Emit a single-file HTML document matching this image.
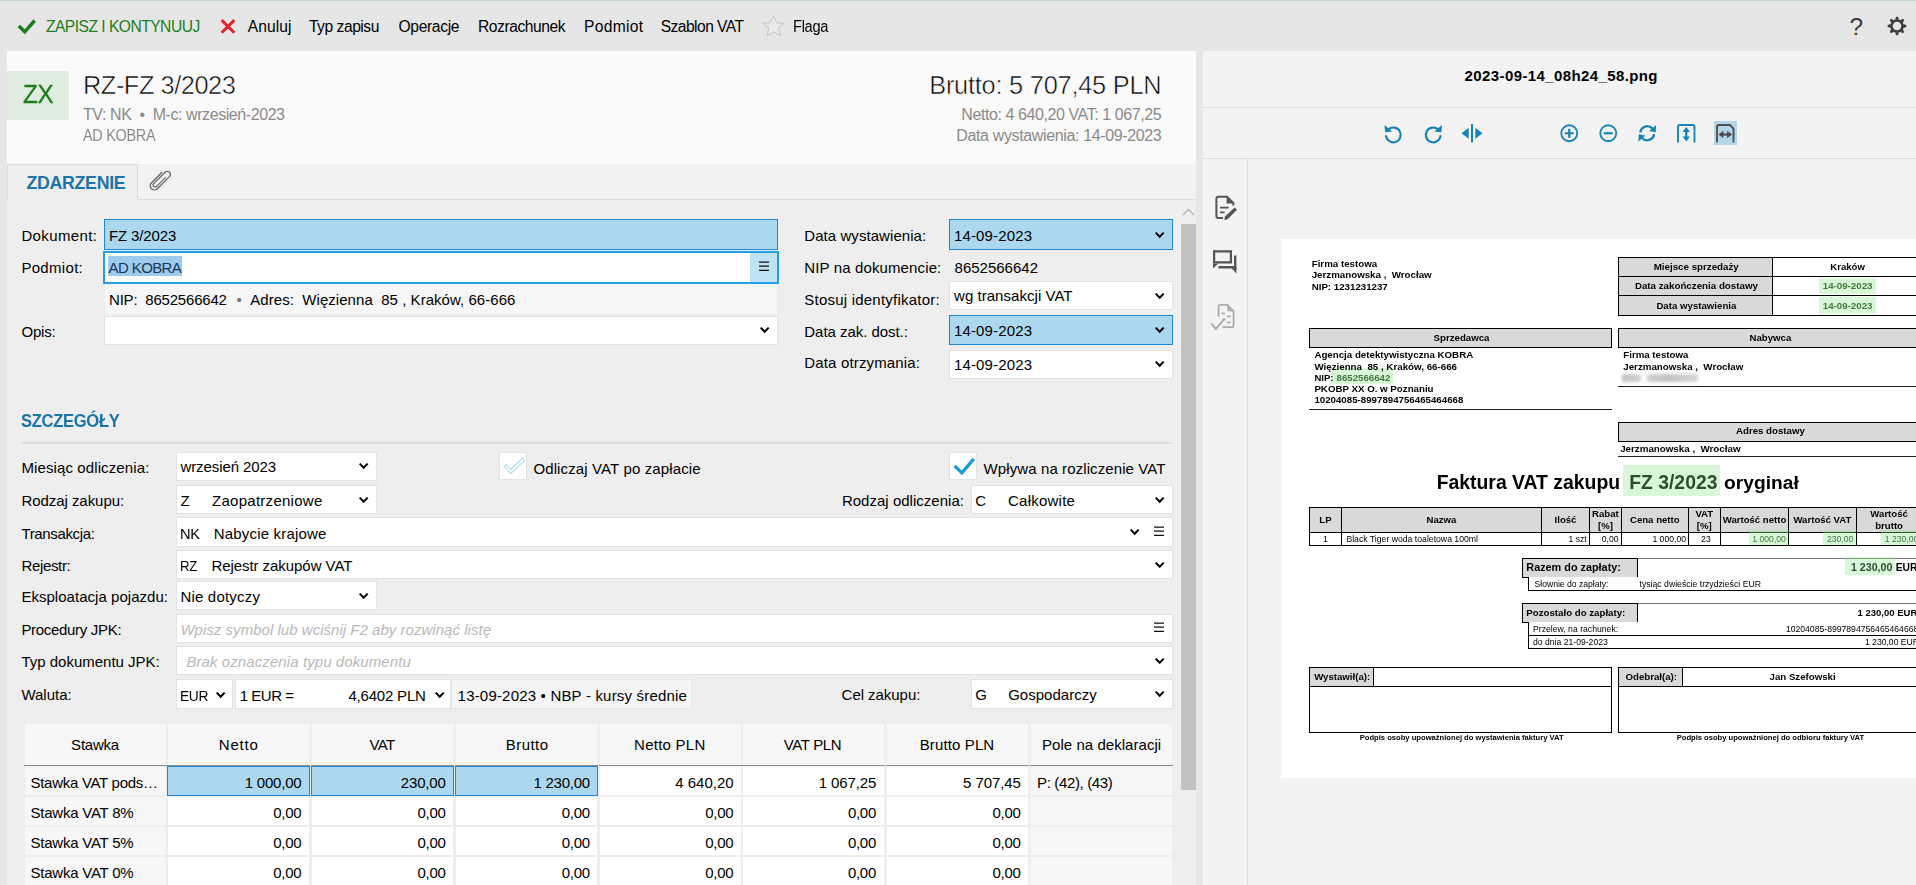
<!DOCTYPE html>
<html lang="pl"><head><meta charset="utf-8"><title>RZ-FZ 3/2023</title>
<style>
html,body{margin:0;padding:0}
body{width:1916px;height:885px;overflow:hidden;position:relative;background:#eee;font-family:"Liberation Sans",sans-serif;color:#000}
.b{position:absolute;box-sizing:border-box}
.t{position:absolute;white-space:pre;line-height:1;display:block}
.inp{position:absolute;box-sizing:border-box;background:#fff;border:1px solid #e3e3e3}
.blue{background:#abd8ef;border:1px solid #1f87d8}
svg{position:absolute;overflow:visible}
.doc{color:#000}
.dt{filter:blur(0.3px)}
.thin{-webkit-text-stroke:0.55px #fafafa}
.zx{-webkit-text-stroke:0.35px #1b7f1b}
</style></head>
<body>
<header id="toolbar">
<div class="b" style="left:0px;top:0px;width:1916px;height:51px;background:#e6e6e6;"></div>
<div class="b" style="left:0px;top:0px;width:1916px;height:1px;background:#c5d8c5;"></div>
</header>
<div class="b" style="left:0px;top:51px;width:7px;height:834px;background:#e6e6e6;"></div>
<section id="docheader">
<div class="b" style="left:7px;top:51px;width:1189px;height:113px;background:#fafafa;"></div>
<div class="b" style="left:7px;top:71px;width:62px;height:49px;background:#e1ece1;"></div>
</section>
<nav id="tabs">
<div class="b" style="left:7px;top:164px;width:1189px;height:36px;background:#f2f2f2;"></div>
<div class="b" style="left:7px;top:199px;width:1189px;height:1px;background:#dcdcdc;"></div>
<div class="b" style="left:7px;top:164px;width:131px;height:36px;background:#eeeeee;border:1px solid #dcdcdc;border-bottom:1px solid #f1f1f1;"></div>
</nav>
<main id="form">
<div class="b" style="left:7px;top:200px;width:1189px;height:685px;background:#eeeeee;"></div>
<div class="inp blue" style="left:104px;top:219px;width:674px;height:31px;"></div>
<div class="b" style="left:103px;top:250.5px;width:676.3px;height:33.0px;background:#fff;border:2px solid #22a0e2;"></div>
<div class="b" style="left:750px;top:252.5px;width:27.299999999999955px;height:29.0px;background:#bde3f5;"></div>
<svg style="left:759px;top:261.2px" width="10" height="10" viewBox="0 0 10 10"><path d="M0 1H10M0 5.2H10M0 9.4H10" stroke="#111" stroke-width="1.25" fill="none"/></svg>
<div class="b" style="left:108px;top:256px;width:74px;height:20px;background:#9dcbee;"></div>
<div class="b" style="left:105px;top:284px;width:672px;height:29.5px;background:#f6f6f6;"></div>
<div class="inp" style="left:104px;top:316px;width:674px;height:29px;"></div>
<svg style="left:759.7px;top:327px" width="9.4" height="6.2" viewBox="0 0 9.4 6.2"><path d="M0 1.3 L1.4 0 L4.7 3.3 L8 0 L9.4 1.3 L4.7 6.2 Z" fill="#000"/></svg>
<div class="inp blue" style="left:949px;top:219px;width:224px;height:31px;"></div>
<div class="inp" style="left:949px;top:281px;width:224px;height:29px;"></div>
<div class="inp blue" style="left:949px;top:315px;width:224px;height:30px;"></div>
<div class="inp" style="left:949px;top:350px;width:224px;height:29px;"></div>
<svg style="left:1154.7px;top:232px" width="9.4" height="6.2" viewBox="0 0 9.4 6.2"><path d="M0 1.3 L1.4 0 L4.7 3.3 L8 0 L9.4 1.3 L4.7 6.2 Z" fill="#000"/></svg>
<svg style="left:1154.7px;top:293px" width="9.4" height="6.2" viewBox="0 0 9.4 6.2"><path d="M0 1.3 L1.4 0 L4.7 3.3 L8 0 L9.4 1.3 L4.7 6.2 Z" fill="#000"/></svg>
<svg style="left:1154.7px;top:327px" width="9.4" height="6.2" viewBox="0 0 9.4 6.2"><path d="M0 1.3 L1.4 0 L4.7 3.3 L8 0 L9.4 1.3 L4.7 6.2 Z" fill="#000"/></svg>
<svg style="left:1154.7px;top:361px" width="9.4" height="6.2" viewBox="0 0 9.4 6.2"><path d="M0 1.3 L1.4 0 L4.7 3.3 L8 0 L9.4 1.3 L4.7 6.2 Z" fill="#000"/></svg>
<div class="b" style="left:1181px;top:200px;width:15px;height:685px;background:#eeeeee;"></div>
<div class="b" style="left:1181px;top:224px;width:15px;height:566px;background:#c1c1c1;"></div>
<svg style="left:1182px;top:208px" width="13" height="8" viewBox="0 0 13 8"><path d="M1 7 L6.5 1.5 L12 7" fill="none" stroke="#b5b5b5" stroke-width="1.4"/></svg>
<div class="b" style="left:21px;top:442px;width:1151px;height:2px;background:#dddddd;"></div>
<div class="inp" style="left:176px;top:452px;width:201px;height:29px;"></div>
<svg style="left:358.7px;top:463px" width="9.4" height="6.2" viewBox="0 0 9.4 6.2"><path d="M0 1.3 L1.4 0 L4.7 3.3 L8 0 L9.4 1.3 L4.7 6.2 Z" fill="#000"/></svg>
<div class="inp" style="left:176px;top:485px;width:201px;height:29px;"></div>
<svg style="left:358.7px;top:497px" width="9.4" height="6.2" viewBox="0 0 9.4 6.2"><path d="M0 1.3 L1.4 0 L4.7 3.3 L8 0 L9.4 1.3 L4.7 6.2 Z" fill="#000"/></svg>
<div class="inp" style="left:176px;top:517px;width:997px;height:30px;"></div>
<svg style="left:1129.7px;top:529px" width="9.4" height="6.2" viewBox="0 0 9.4 6.2"><path d="M0 1.3 L1.4 0 L4.7 3.3 L8 0 L9.4 1.3 L4.7 6.2 Z" fill="#000"/></svg>
<svg style="left:1154px;top:526.3px" width="10" height="10" viewBox="0 0 10 10"><path d="M0 1H10M0 5.2H10M0 9.4H10" stroke="#111" stroke-width="1.25" fill="none"/></svg>
<div class="inp" style="left:176px;top:550px;width:997px;height:29px;"></div>
<svg style="left:1154.7px;top:562px" width="9.4" height="6.2" viewBox="0 0 9.4 6.2"><path d="M0 1.3 L1.4 0 L4.7 3.3 L8 0 L9.4 1.3 L4.7 6.2 Z" fill="#000"/></svg>
<div class="inp" style="left:176px;top:581px;width:201px;height:29px;"></div>
<svg style="left:358.7px;top:593px" width="9.4" height="6.2" viewBox="0 0 9.4 6.2"><path d="M0 1.3 L1.4 0 L4.7 3.3 L8 0 L9.4 1.3 L4.7 6.2 Z" fill="#000"/></svg>
<div class="inp" style="left:176px;top:614px;width:997px;height:29px;"></div>
<svg style="left:1154px;top:622px" width="10" height="10" viewBox="0 0 10 10"><path d="M0 1H10M0 5.2H10M0 9.4H10" stroke="#111" stroke-width="1.25" fill="none"/></svg>
<div class="inp" style="left:176px;top:646px;width:997px;height:29px;"></div>
<svg style="left:1154.7px;top:658px" width="9.4" height="6.2" viewBox="0 0 9.4 6.2"><path d="M0 1.3 L1.4 0 L4.7 3.3 L8 0 L9.4 1.3 L4.7 6.2 Z" fill="#000"/></svg>
<div class="inp" style="left:176px;top:679px;width:57px;height:30px;"></div>
<svg style="left:215.7px;top:692px" width="9.4" height="6.2" viewBox="0 0 9.4 6.2"><path d="M0 1.3 L1.4 0 L4.7 3.3 L8 0 L9.4 1.3 L4.7 6.2 Z" fill="#000"/></svg>
<div class="inp" style="left:235px;top:679px;width:216px;height:30px;"></div>
<svg style="left:434.7px;top:692px" width="9.4" height="6.2" viewBox="0 0 9.4 6.2"><path d="M0 1.3 L1.4 0 L4.7 3.3 L8 0 L9.4 1.3 L4.7 6.2 Z" fill="#000"/></svg>
<div class="b" style="left:451px;top:679px;width:241px;height:30px;background:#f5f5f5;border:1px solid #e6e6e6;"></div>
<div class="inp" style="left:498.5px;top:451.5px;width:28.799999999999955px;height:28.80000000000001px;"></div>
<svg style="left:498px;top:451px" width="30" height="30" viewBox="0 0 30 30"><path d="M6.4 15.7 L12.7 22.6 L26.4 9.7 L24.7 7 L12.7 18.5 L8.6 14 Z" fill="#fff" stroke="#a9dcf1" stroke-width="1.1" stroke-linejoin="round"/></svg>
<div class="inp" style="left:948.5px;top:451.5px;width:28.799999999999955px;height:28.80000000000001px;"></div>
<svg style="left:952px;top:456px" width="24" height="20" viewBox="0 0 24 20"><path d="M2.6 9.8 L9.9 16.8 L21.8 2.9" fill="none" stroke="#1b9ad8" stroke-width="3.2"/></svg>
<div class="inp" style="left:971px;top:485px;width:202px;height:29px;"></div>
<svg style="left:1154.7px;top:497px" width="9.4" height="6.2" viewBox="0 0 9.4 6.2"><path d="M0 1.3 L1.4 0 L4.7 3.3 L8 0 L9.4 1.3 L4.7 6.2 Z" fill="#000"/></svg>
<div class="inp" style="left:971px;top:679px;width:202px;height:30px;"></div>
<svg style="left:1154.7px;top:691px" width="9.4" height="6.2" viewBox="0 0 9.4 6.2"><path d="M0 1.3 L1.4 0 L4.7 3.3 L8 0 L9.4 1.3 L4.7 6.2 Z" fill="#000"/></svg>
<div class="b" style="left:25px;top:724px;width:141px;height:41px;background:#f7f7f7;"></div>
<div class="b" style="left:24px;top:764.5px;width:143px;height:1.1000000000000227px;background:#8c8c8c;"></div>
<div class="b" style="left:168px;top:724px;width:141px;height:41px;background:#f7f7f7;"></div>
<div class="b" style="left:167px;top:764.5px;width:143px;height:1.1000000000000227px;background:#8c8c8c;"></div>
<div class="b" style="left:312px;top:724px;width:141px;height:41px;background:#f7f7f7;"></div>
<div class="b" style="left:311px;top:764.5px;width:143px;height:1.1000000000000227px;background:#8c8c8c;"></div>
<div class="b" style="left:456px;top:724px;width:141px;height:41px;background:#f7f7f7;"></div>
<div class="b" style="left:455px;top:764.5px;width:143px;height:1.1000000000000227px;background:#8c8c8c;"></div>
<div class="b" style="left:599.5px;top:724px;width:141.0px;height:41px;background:#f7f7f7;"></div>
<div class="b" style="left:598.5px;top:764.5px;width:143.0px;height:1.1000000000000227px;background:#8c8c8c;"></div>
<div class="b" style="left:743px;top:724px;width:141px;height:41px;background:#f7f7f7;"></div>
<div class="b" style="left:742px;top:764.5px;width:143px;height:1.1000000000000227px;background:#8c8c8c;"></div>
<div class="b" style="left:887px;top:724px;width:141px;height:41px;background:#f7f7f7;"></div>
<div class="b" style="left:886px;top:764.5px;width:143px;height:1.1000000000000227px;background:#8c8c8c;"></div>
<div class="b" style="left:1031px;top:724px;width:141px;height:41px;background:#f7f7f7;"></div>
<div class="b" style="left:1030px;top:764.5px;width:143px;height:1.1000000000000227px;background:#8c8c8c;"></div>
<div class="b" style="left:25px;top:767px;width:141px;height:28px;background:#f7f7f7;"></div>
<div class="inp blue" style="left:167px;top:766px;width:143.2px;height:30px;"></div>
<div class="inp blue" style="left:311px;top:766px;width:143.2px;height:30px;"></div>
<div class="inp blue" style="left:455px;top:766px;width:143.20000000000005px;height:30px;"></div>
<div class="b" style="left:599.5px;top:767px;width:141.0px;height:28px;background:#ffffff;"></div>
<div class="b" style="left:743px;top:767px;width:141px;height:28px;background:#ffffff;"></div>
<div class="b" style="left:887px;top:767px;width:141px;height:28px;background:#ffffff;"></div>
<div class="b" style="left:1031px;top:767px;width:141px;height:28px;background:#f7f7f7;"></div>
<div class="b" style="left:25px;top:797px;width:141px;height:28px;background:#f7f7f7;"></div>
<div class="b" style="left:168px;top:797px;width:141px;height:28px;background:#ffffff;"></div>
<div class="b" style="left:312px;top:797px;width:141px;height:28px;background:#ffffff;"></div>
<div class="b" style="left:456px;top:797px;width:141px;height:28px;background:#ffffff;"></div>
<div class="b" style="left:599.5px;top:797px;width:141.0px;height:28px;background:#ffffff;"></div>
<div class="b" style="left:743px;top:797px;width:141px;height:28px;background:#ffffff;"></div>
<div class="b" style="left:887px;top:797px;width:141px;height:28px;background:#ffffff;"></div>
<div class="b" style="left:1031px;top:797px;width:141px;height:28px;background:#f7f7f7;"></div>
<div class="b" style="left:25px;top:827px;width:141px;height:28px;background:#f7f7f7;"></div>
<div class="b" style="left:168px;top:827px;width:141px;height:28px;background:#ffffff;"></div>
<div class="b" style="left:312px;top:827px;width:141px;height:28px;background:#ffffff;"></div>
<div class="b" style="left:456px;top:827px;width:141px;height:28px;background:#ffffff;"></div>
<div class="b" style="left:599.5px;top:827px;width:141.0px;height:28px;background:#ffffff;"></div>
<div class="b" style="left:743px;top:827px;width:141px;height:28px;background:#ffffff;"></div>
<div class="b" style="left:887px;top:827px;width:141px;height:28px;background:#ffffff;"></div>
<div class="b" style="left:1031px;top:827px;width:141px;height:28px;background:#f7f7f7;"></div>
<div class="b" style="left:25px;top:857px;width:141px;height:28px;background:#f7f7f7;"></div>
<div class="b" style="left:168px;top:857px;width:141px;height:28px;background:#ffffff;"></div>
<div class="b" style="left:312px;top:857px;width:141px;height:28px;background:#ffffff;"></div>
<div class="b" style="left:456px;top:857px;width:141px;height:28px;background:#ffffff;"></div>
<div class="b" style="left:599.5px;top:857px;width:141.0px;height:28px;background:#ffffff;"></div>
<div class="b" style="left:743px;top:857px;width:141px;height:28px;background:#ffffff;"></div>
<div class="b" style="left:887px;top:857px;width:141px;height:28px;background:#ffffff;"></div>
<div class="b" style="left:1031px;top:857px;width:141px;height:28px;background:#f7f7f7;"></div>
</main>
<aside id="preview">
<div class="b" style="left:1196px;top:51px;width:7px;height:834px;background:#e6e6e6;"></div>
<div class="b" style="left:1203px;top:51px;width:713px;height:834px;background:#f3f3f3;"></div>
<div class="b" style="left:1203px;top:107px;width:713px;height:1px;background:#dcdcdc;"></div>
<div class="b" style="left:1203px;top:158px;width:713px;height:1px;background:#dcdcdc;"></div>
<div class="b" style="left:1247px;top:159px;width:1px;height:726px;background:#dcdcdc;"></div>
<svg style="left:1384.2px;top:123.9px" width="18.5" height="18.5" viewBox="0 0 20 20"><path d="M4.6 6 A8 8 0 1 1 2.1 12.2" fill="none" stroke="#1484b8" stroke-width="2.3"/><path d="M0.6 1.2 L1.2 9 L8.8 8.2 Z" fill="#1484b8"/></svg>
<svg style="left:1423.9px;top:123.9px" width="18.5" height="18.5" viewBox="0 0 20 20"><path d="M15.4 6 A8 8 0 1 0 17.9 12.2" fill="none" stroke="#1484b8" stroke-width="2.3"/><path d="M19.4 1.2 L18.8 9 L11.2 8.2 Z" fill="#1484b8"/></svg>
<svg style="left:1460.8px;top:123.5px" width="22" height="18.5" viewBox="0 0 24 20"><path d="M12 0 V20" stroke="#1484b8" stroke-width="2.2"/><path d="M8.4 4 V16 L0.6 10 Z M15.6 4 V16 L23.4 10 Z" fill="#1484b8"/></svg>
<svg style="left:1560px;top:124px" width="18.5" height="18.5" viewBox="0 0 20 20"><circle cx="10" cy="10" r="8.6" fill="none" stroke="#1484b8" stroke-width="2"/><path d="M5.2 10 H14.8 M10 5.2 V14.8" stroke="#1484b8" stroke-width="2.4"/></svg>
<svg style="left:1599px;top:124px" width="18.5" height="18.5" viewBox="0 0 20 20"><circle cx="10" cy="10" r="8.6" fill="none" stroke="#1484b8" stroke-width="2"/><path d="M5.2 10 H14.8" stroke="#1484b8" stroke-width="2.4"/></svg>
<svg style="left:1638.2px;top:124px" width="18.5" height="18.5" viewBox="0 0 20 20"><path d="M2.6 9 A7.5 7.5 0 0 1 15.6 4.9" fill="none" stroke="#1484b8" stroke-width="2.5"/><path d="M17.4 11 A7.5 7.5 0 0 1 4.4 15.1" fill="none" stroke="#1484b8" stroke-width="2.5"/><path d="M19.6 1.2 L19.2 9 L12 7.6 Z M0.4 18.8 L0.8 11 L8 12.4 Z" fill="#1484b8"/></svg>
<svg style="left:1676.8px;top:124px" width="18.5" height="18.5" viewBox="0 0 20 20"><path d="M1.1 20 V3.2 Q1.1 1.1 3.2 1.1 H16.8 Q18.9 1.1 18.9 3.2 V20" fill="none" stroke="#1484b8" stroke-width="2"/><path d="M10 6 V16" stroke="#1484b8" stroke-width="2.4"/><path d="M10 3.2 L14 8.6 H6 Z M10 18.8 L14 13.4 H6 Z" fill="#1484b8"/></svg>
<div class="b" style="left:1713.7px;top:121px;width:23.299999999999955px;height:23.69999999999999px;background:#b5d6e8;"></div>
<svg style="left:1716px;top:124px" width="18.5" height="18.5" viewBox="0 0 20 20"><path d="M1.1 20 V3.2 Q1.1 1.1 3.2 1.1 H15 L18.9 5 V20" fill="none" stroke="#4d4d4d" stroke-width="2"/><path d="M5 11.4 H15" stroke="#4d4d4d" stroke-width="2.4"/><path d="M2.6 11.4 L8 7.4 V15.4 Z M17.4 11.4 L12 7.4 V15.4 Z" fill="#4d4d4d"/></svg>
<svg style="left:1887px;top:16.3px" width="20" height="20" viewBox="0 0 20 20"><g transform="translate(10 10)" fill="#3c3c3c"><path d="M-1.9 -6.2 L-0.9 -9.3 H0.9 L1.9 -6.2 Z" transform="rotate(0)"/><path d="M-1.9 -6.2 L-0.9 -9.3 H0.9 L1.9 -6.2 Z" transform="rotate(45)"/><path d="M-1.9 -6.2 L-0.9 -9.3 H0.9 L1.9 -6.2 Z" transform="rotate(90)"/><path d="M-1.9 -6.2 L-0.9 -9.3 H0.9 L1.9 -6.2 Z" transform="rotate(135)"/><path d="M-1.9 -6.2 L-0.9 -9.3 H0.9 L1.9 -6.2 Z" transform="rotate(180)"/><path d="M-1.9 -6.2 L-0.9 -9.3 H0.9 L1.9 -6.2 Z" transform="rotate(225)"/><path d="M-1.9 -6.2 L-0.9 -9.3 H0.9 L1.9 -6.2 Z" transform="rotate(270)"/><path d="M-1.9 -6.2 L-0.9 -9.3 H0.9 L1.9 -6.2 Z" transform="rotate(315)"/><circle r="5.55" fill="none" stroke="#3c3c3c" stroke-width="2.5"/></g></svg>
<svg style="left:1214px;top:194px" width="24" height="27" viewBox="0 0 24 27"><path d="M9 24 H4.3 Q2.4 24 2.4 22.1 V4.6 Q2.4 2.7 4.3 2.7 H13 L19.4 9 V11.5" fill="none" stroke="#555555" stroke-width="2"/><path d="M12.6 2.9 L19.2 9.4 H12.6 Z" fill="#555555"/><path d="M6 13.6 H14.6 M6 18.4 H10.6" stroke="#555555" stroke-width="1.9"/><path d="M10.3 26 L11 22.6 L20.6 13.4 L23 15.8 L13.6 25.2 Z" fill="#555555"/></svg>
<svg style="left:1212px;top:249px" width="26" height="26" viewBox="0 0 26 26"><path d="M2.1 2.4 H18.9 V13.4 H2.1 Z" fill="none" stroke="#555555" stroke-width="2.2"/><path d="M1 14.4 V19.4 L6.4 14.4 Z" fill="#555555"/><path d="M23.2 6.4 V21 M6.5 18.3 H24.3" fill="none" stroke="#555555" stroke-width="2.4"/><path d="M18.5 18 L24.4 24.4 V18 Z" fill="#555555"/></svg>
<svg style="left:1210px;top:303px" width="26" height="28" viewBox="0 0 26 28"><path d="M8.6 14 V3.6 Q8.6 1.9 10.3 1.9 H17.5 L23.6 8 V22.4 Q23.6 24.1 21.9 24.1 H12.5" fill="none" stroke="#adadad" stroke-width="1.8"/><path d="M17.2 2.2 L23.3 8.3 H17.2 Z" fill="#adadad"/><path d="M11.5 10.4 h3.5 M17 13.4 h3.6 M12.5 16.4 h3 M17 19.4 h3.6" stroke="#adadad" stroke-width="1.7"/><path d="M1.2 20.4 L5.8 26 L14.6 15.6" fill="none" stroke="#adadad" stroke-width="2"/></svg>
<svg style="left:0px;top:0px" width="60" height="51" viewBox="0 0 60 51"><path d="M18.8 25.9 L24.8 31.8 L34.7 20.5" fill="none" stroke="#1b7f1b" stroke-width="3.5"/></svg>
<svg style="left:200px;top:0px" width="60" height="51" viewBox="0 0 60 51"><path d="M21.6 20.1 L34.3 32.8 M34.3 20.1 L21.6 32.8" fill="none" stroke="#e3262e" stroke-width="3"/></svg>
<svg style="left:750px;top:0px" width="60" height="51" viewBox="0 0 60 51"><path d="M23.5 16.3 L26.9 22.7 L33.8 23.3 L28.5 28 L30.5 35.6 L23.7 32 L17.3 35.6 L18.8 28 L13.4 23.3 L20 22.7 Z" fill="#e9e9e9" stroke="#c4c4c4" stroke-width="1"/></svg>
<svg style="left:147.6px;top:168.2px" width="24" height="24" viewBox="0 0 24 24"><g transform="rotate(45 12 12) translate(12 12) scale(1.07) translate(-12 -12)" fill="none" stroke="#666" stroke-width="1.15"><path d="M8.2 5.5 V19.5 A3.9 3.9 0 0 0 16 19.5 V3.5 A2.9 2.9 0 0 0 10.2 3.5 V18.5 A1.9 1.9 0 0 0 14 18.5 V6.5"/></g></svg>
<article id="invoice" class="doc">
<div class="b" style="left:1281px;top:239px;width:635px;height:539px;background:#ffffff;"></div>
<div class="b" style="left:1618px;top:257px;width:312px;height:59px;background:#fff;border:1px solid #000;"></div>
<div class="b" style="left:1618px;top:257px;width:155px;height:59px;background:#d9d9d9;border:1px solid #000;"></div>
<div class="b" style="left:1618px;top:276px;width:312px;height:1px;background:#000;"></div>
<div class="b" style="left:1618px;top:295px;width:312px;height:1px;background:#000;"></div>
<div class="b" style="left:1819px;top:277.5px;width:56.5px;height:16.0px;background:rgba(140,235,140,0.34);"></div>
<div class="b" style="left:1819px;top:297px;width:56.5px;height:16.5px;background:rgba(140,235,140,0.34);"></div>
<div class="b" style="left:1309px;top:328px;width:303px;height:20px;background:#d9d9d9;border:1px solid #000;"></div>
<div class="b" style="left:1618px;top:328px;width:312px;height:20px;background:#d9d9d9;border:1px solid #000;"></div>
<div class="b" style="left:1330.7px;top:367.5px;width:62.59999999999991px;height:16.5px;background:rgba(140,235,140,0.34);"></div>
<div class="b" style="left:1309px;top:408.8px;width:303px;height:1.1999999999999886px;background:#222;"></div>
<div class="b" style="left:1622px;top:373.5px;width:76px;height:8.5px;background:linear-gradient(90deg,#c4c4c4,#d0d0d0 22%,#fff 27%,#fff 31%,#cfcfcf 35%,#c2c2c2 60%,#d6d6d6);filter:blur(1.5px);"></div>
<div class="b" style="left:1618px;top:385.5px;width:312px;height:1.0px;background:#222;"></div>
<div class="b" style="left:1618px;top:422px;width:312px;height:20px;background:#d9d9d9;border:1px solid #000;"></div>
<div class="b" style="left:1618px;top:455.5px;width:312px;height:1.0px;background:#222;"></div>
<div class="b" style="left:1622.6px;top:465px;width:97.20000000000005px;height:31.399999999999977px;background:rgba(140,235,140,0.34);"></div>
<div class="b" style="left:1309px;top:507px;width:621px;height:26px;background:#d9d9d9;border:1px solid #000;"></div>
<div class="b" style="left:1309px;top:532px;width:621px;height:14px;background:#fff;border:1px solid #000;"></div>
<div class="b" style="left:1341px;top:507px;width:1px;height:39px;background:#000;"></div>
<div class="b" style="left:1541px;top:507px;width:1px;height:39px;background:#000;"></div>
<div class="b" style="left:1589px;top:507px;width:1px;height:39px;background:#000;"></div>
<div class="b" style="left:1620.8px;top:507px;width:1.0px;height:39px;background:#000;"></div>
<div class="b" style="left:1687.8px;top:507px;width:1.0px;height:39px;background:#000;"></div>
<div class="b" style="left:1719.8px;top:507px;width:1.0px;height:39px;background:#000;"></div>
<div class="b" style="left:1788.2px;top:507px;width:1.0px;height:39px;background:#000;"></div>
<div class="b" style="left:1855.6px;top:507px;width:1.0px;height:39px;background:#000;"></div>
<div class="b" style="left:1748.6px;top:529.5px;width:39.40000000000009px;height:15.100000000000023px;background:rgba(140,235,140,0.34);"></div>
<div class="b" style="left:1823.4px;top:529.5px;width:32.09999999999991px;height:15.100000000000023px;background:rgba(140,235,140,0.34);"></div>
<div class="b" style="left:1880.8px;top:529.5px;width:35.200000000000045px;height:15.100000000000023px;background:rgba(140,235,140,0.34);"></div>
<div class="b" style="left:1637px;top:558px;width:293px;height:19.5px;background:#fff;border:1px solid #777;"></div>
<div class="b" style="left:1521.5px;top:558px;width:116.5px;height:19.5px;background:#d9d9d9;border:1px solid #000;"></div>
<div class="b" style="left:1845.2px;top:557px;width:49.5px;height:17.5px;background:rgba(140,235,140,0.34);"></div>
<div class="b" style="left:1528px;top:577px;width:402px;height:14px;background:#fff;border:1px solid #000;border-top:none;"></div>
<div class="b" style="left:1637px;top:603px;width:293px;height:19.5px;background:#fff;border:1px solid #777;"></div>
<div class="b" style="left:1521.5px;top:603px;width:116.5px;height:19.5px;background:#d9d9d9;border:1px solid #000;"></div>
<div class="b" style="left:1528px;top:622px;width:402px;height:14px;background:#fff;border:1px solid #000;border-top:none;"></div>
<div class="b" style="left:1528px;top:635px;width:402px;height:14px;background:#fff;border:1px solid #000;"></div>
<div class="b" style="left:1309px;top:667px;width:303px;height:66px;background:#fff;border:1px solid #000;"></div>
<div class="b" style="left:1309px;top:667px;width:65px;height:20px;background:#d9d9d9;border:1px solid #000;"></div>
<div class="b" style="left:1309px;top:686px;width:303px;height:1px;background:#000;"></div>
<div class="b" style="left:1618px;top:667px;width:312px;height:66px;background:#fff;border:1px solid #000;"></div>
<div class="b" style="left:1618px;top:667px;width:65px;height:20px;background:#d9d9d9;border:1px solid #000;"></div>
<div class="b" style="left:1618px;top:686px;width:312px;height:1px;background:#000;"></div>
<span class="t" style="top:18px;font-size:15.6px;line-height:17px;left:45.90px;color:#1b7f1b;letter-spacing:-0.505px;">ZAPISZ I KONTYNUUJ</span>
<span class="t" style="top:18px;font-size:15.6px;line-height:17px;left:247.80px;letter-spacing:0.048px;">Anuluj</span>
<span class="t" style="top:18px;font-size:15.6px;line-height:17px;left:308.90px;letter-spacing:-0.450px;">Typ zapisu</span>
<span class="t" style="top:18px;font-size:15.6px;line-height:17px;left:398.50px;letter-spacing:-0.326px;">Operacje</span>
<span class="t" style="top:18px;font-size:15.6px;line-height:17px;left:478.00px;letter-spacing:-0.439px;">Rozrachunek</span>
<span class="t" style="top:18px;font-size:15.6px;line-height:17px;left:584.00px;letter-spacing:0.297px;">Podmiot</span>
<span class="t" style="top:18px;font-size:15.6px;line-height:17px;left:660.70px;letter-spacing:-0.540px;">Szablon VAT</span>
<span class="t" style="top:18px;font-size:15.6px;line-height:17px;left:792.90px;letter-spacing:-0.350px;transform:scaleX(0.9411);transform-origin:0 0;">Flaga</span>
<span class="t" style="top:13px;font-size:24.5px;line-height:27px;left:1849.60px;color:#3c3c3c;">?</span>
<span class="t zx" style="top:80px;font-size:25.7px;line-height:28px;left:22.90px;color:#1b7f1b;letter-spacing:-0.350px;transform:scaleX(0.9422);transform-origin:0 0;">ZX</span>
<span class="t thin" style="top:71px;font-size:25.4px;line-height:28px;left:83.00px;letter-spacing:-0.477px;">RZ-FZ 3/2023</span>
<span class="t" style="top:106px;font-size:16px;line-height:17px;left:83.00px;color:#8a8a8a;letter-spacing:-0.427px;">TV: NK  •  M-c: wrzesień-2023</span>
<span class="t" style="top:127px;font-size:16px;line-height:17px;left:83.00px;color:#8a8a8a;letter-spacing:-0.350px;transform:scaleX(0.9048);transform-origin:0 0;">AD KOBRA</span>
<span class="t thin" style="top:71px;font-size:25.4px;line-height:28px;left:929.20px;letter-spacing:-0.244px;">Brutto: 5 707,45 PLN</span>
<span class="t" style="top:106px;font-size:16px;line-height:17px;left:961.30px;color:#8a8a8a;letter-spacing:-0.414px;">Netto: 4 640,20 VAT: 1 067,25</span>
<span class="t" style="top:127px;font-size:16px;line-height:17px;left:956.30px;color:#8a8a8a;letter-spacing:-0.364px;">Data wystawienia: 14-09-2023</span>
<span class="t" style="top:173px;font-size:17.8px;line-height:20px;left:26.60px;font-weight:700;color:#1b75a8;letter-spacing:-0.344px;">ZDARZENIE</span>
<span class="t" style="top:227px;font-size:15px;line-height:17px;left:21.40px;letter-spacing:0.369px;">Dokument:</span>
<span class="t" style="top:227px;font-size:15px;line-height:17px;left:108.90px;letter-spacing:-0.109px;">FZ 3/2023</span>
<span class="t" style="top:259px;font-size:15px;line-height:17px;left:21.40px;letter-spacing:0.314px;">Podmiot:</span>
<span class="t" style="top:259px;font-size:15px;line-height:17px;left:108.60px;color:#1c3558;letter-spacing:-0.619px;">AD KOBRA</span>
<span class="t" style="top:291px;font-size:15px;line-height:17px;left:109.00px;letter-spacing:-0.202px;">NIP:  8652566642</span>
<span class="t" style="top:291px;font-size:15px;line-height:17px;left:236.40px;color:#777;">•</span>
<span class="t" style="top:291px;font-size:15px;line-height:17px;left:250.30px;letter-spacing:0.044px;">Adres:  Więzienna  85 , Kraków, 66-666</span>
<span class="t" style="top:323px;font-size:15px;line-height:17px;left:21.40px;letter-spacing:-0.154px;">Opis:</span>
<span class="t" style="top:227px;font-size:15px;line-height:17px;left:804.30px;letter-spacing:0.063px;">Data wystawienia:</span>
<span class="t" style="top:227px;font-size:15px;line-height:17px;left:954.00px;letter-spacing:0.141px;">14-09-2023</span>
<span class="t" style="top:259px;font-size:15px;line-height:17px;left:804.30px;letter-spacing:0.129px;">NIP na dokumencie:</span>
<span class="t" style="top:259px;font-size:15px;line-height:17px;left:954.60px;letter-spacing:-0.004px;">8652566642</span>
<span class="t" style="top:291px;font-size:15px;line-height:17px;left:804.30px;letter-spacing:0.220px;">Stosuj identyfikator:</span>
<span class="t" style="top:287px;font-size:15px;line-height:17px;left:954.00px;letter-spacing:0.043px;">wg transakcji VAT</span>
<span class="t" style="top:323px;font-size:15px;line-height:17px;left:804.30px;letter-spacing:-0.041px;">Data zak. dost.:</span>
<span class="t" style="top:322px;font-size:15px;line-height:17px;left:954.00px;letter-spacing:0.141px;">14-09-2023</span>
<span class="t" style="top:354px;font-size:15px;line-height:17px;left:804.30px;letter-spacing:0.154px;">Data otrzymania:</span>
<span class="t" style="top:356px;font-size:15px;line-height:17px;left:954.00px;letter-spacing:0.141px;">14-09-2023</span>
<span class="t" style="top:411px;font-size:18px;line-height:20px;left:21.40px;font-weight:700;color:#1b75a8;letter-spacing:-0.350px;transform:scaleX(0.9215);transform-origin:0 0;">SZCZEGÓŁY</span>
<span class="t" style="top:459px;font-size:15px;line-height:17px;left:21.40px;letter-spacing:0.112px;">Miesiąc odliczenia:</span>
<span class="t" style="top:492px;font-size:15px;line-height:17px;left:21.40px;letter-spacing:-0.047px;">Rodzaj zakupu:</span>
<span class="t" style="top:525px;font-size:15px;line-height:17px;left:21.40px;letter-spacing:-0.348px;">Transakcja:</span>
<span class="t" style="top:557px;font-size:15px;line-height:17px;left:21.40px;letter-spacing:-0.327px;">Rejestr:</span>
<span class="t" style="top:588px;font-size:15px;line-height:17px;left:21.40px;letter-spacing:0.033px;">Eksploatacja pojazdu:</span>
<span class="t" style="top:621px;font-size:15px;line-height:17px;left:21.40px;letter-spacing:-0.309px;">Procedury JPK:</span>
<span class="t" style="top:653px;font-size:15px;line-height:17px;left:21.40px;letter-spacing:-0.006px;">Typ dokumentu JPK:</span>
<span class="t" style="top:686px;font-size:15px;line-height:17px;left:21.40px;letter-spacing:0.017px;">Waluta:</span>
<span class="t" style="top:458px;font-size:15px;line-height:17px;left:180.40px;letter-spacing:-0.078px;">wrzesień 2023</span>
<span class="t" style="top:492px;font-size:15px;line-height:17px;left:180.40px;">Z</span>
<span class="t" style="top:492px;font-size:15px;line-height:17px;left:212.00px;letter-spacing:0.274px;">Zaopatrzeniowe</span>
<span class="t" style="top:525px;font-size:15px;line-height:17px;left:180.40px;letter-spacing:-0.350px;transform:scaleX(0.9759);transform-origin:0 0;">NK</span>
<span class="t" style="top:525px;font-size:15px;line-height:17px;left:213.80px;letter-spacing:0.175px;">Nabycie krajowe</span>
<span class="t" style="top:557px;font-size:15px;line-height:17px;left:180.40px;letter-spacing:-0.350px;transform:scaleX(0.8804);transform-origin:0 0;">RZ</span>
<span class="t" style="top:557px;font-size:15px;line-height:17px;left:211.40px;letter-spacing:-0.056px;">Rejestr zakupów VAT</span>
<span class="t" style="top:588px;font-size:15px;line-height:17px;left:180.40px;letter-spacing:0.197px;">Nie dotyczy</span>
<span class="t" style="top:621px;font-size:15px;line-height:17px;left:180.40px;color:#b9b9b9;font-style:italic;letter-spacing:0.030px;">Wpisz symbol lub wciśnij F2 aby rozwinąć listę</span>
<span class="t" style="top:653px;font-size:15px;line-height:17px;left:186.40px;color:#b9b9b9;font-style:italic;letter-spacing:0.089px;">Brak oznaczenia typu dokumentu</span>
<span class="t" style="top:687px;font-size:15px;line-height:17px;left:180.40px;letter-spacing:-0.350px;transform:scaleX(0.9170);transform-origin:0 0;">EUR</span>
<span class="t" style="top:687px;font-size:15px;line-height:17px;left:239.80px;letter-spacing:-0.502px;">1 EUR =</span>
<span class="t" style="top:687px;font-size:15px;line-height:17px;left:348.40px;letter-spacing:-0.193px;">4,6402 PLN</span>
<span class="t" style="top:687px;font-size:15px;line-height:17px;left:457.60px;letter-spacing:0.190px;">13-09-2023 • NBP - kursy średnie</span>
<span class="t" style="top:460px;font-size:15px;line-height:17px;left:533.40px;letter-spacing:0.128px;">Odliczaj VAT po zapłacie</span>
<span class="t" style="top:460px;font-size:15px;line-height:17px;left:983.60px;letter-spacing:0.099px;">Wpływa na rozliczenie VAT</span>
<span class="t" style="top:492px;font-size:15px;line-height:17px;left:841.90px;letter-spacing:0.021px;">Rodzaj odliczenia:</span>
<span class="t" style="top:492px;font-size:15px;line-height:17px;left:975.30px;">C</span>
<span class="t" style="top:492px;font-size:15px;line-height:17px;left:1008.00px;letter-spacing:0.234px;">Całkowite</span>
<span class="t" style="top:686px;font-size:15px;line-height:17px;left:841.60px;letter-spacing:-0.042px;">Cel zakupu:</span>
<span class="t" style="top:686px;font-size:15px;line-height:17px;left:975.20px;">G</span>
<span class="t" style="top:686px;font-size:15px;line-height:17px;left:1008.20px;letter-spacing:0.013px;">Gospodarczy</span>
<span class="t" style="top:736px;font-size:15px;line-height:17px;left:71.10px;letter-spacing:-0.221px;">Stawka</span>
<span class="t" style="top:736px;font-size:15px;line-height:17px;left:218.80px;letter-spacing:0.785px;">Netto</span>
<span class="t" style="top:736px;font-size:15px;line-height:17px;left:369.40px;letter-spacing:-0.627px;">VAT</span>
<span class="t" style="top:736px;font-size:15px;line-height:17px;left:505.70px;letter-spacing:0.474px;">Brutto</span>
<span class="t" style="top:736px;font-size:15px;line-height:17px;left:634.10px;letter-spacing:0.250px;">Netto PLN</span>
<span class="t" style="top:736px;font-size:15px;line-height:17px;left:783.80px;letter-spacing:-0.372px;">VAT PLN</span>
<span class="t" style="top:736px;font-size:15px;line-height:17px;left:919.70px;letter-spacing:0.125px;">Brutto PLN</span>
<span class="t" style="top:736px;font-size:15px;line-height:17px;left:1042.00px;letter-spacing:0.047px;">Pole na deklaracji</span>
<span class="t" style="top:774px;font-size:15px;line-height:17px;left:30.50px;letter-spacing:-0.282px;">Stawka VAT pods…</span>
<span class="t" style="top:774px;font-size:15px;line-height:17px;left:244.80px;letter-spacing:-0.227px;">1 000,00</span>
<span class="t" style="top:774px;font-size:15px;line-height:17px;left:400.80px;letter-spacing:-0.158px;">230,00</span>
<span class="t" style="top:774px;font-size:15px;line-height:17px;left:533.40px;letter-spacing:-0.227px;">1 230,00</span>
<span class="t" style="top:774px;font-size:15px;line-height:17px;left:675.20px;letter-spacing:0.016px;">4 640,20</span>
<span class="t" style="top:774px;font-size:15px;line-height:17px;left:818.80px;letter-spacing:-0.127px;">1 067,25</span>
<span class="t" style="top:774px;font-size:15px;line-height:17px;left:963.10px;letter-spacing:-0.084px;">5 707,45</span>
<span class="t" style="top:804px;font-size:15px;line-height:17px;left:30.50px;letter-spacing:-0.233px;">Stawka VAT 8%</span>
<span class="t" style="top:804px;font-size:15px;line-height:17px;left:273.20px;letter-spacing:-0.268px;">0,00</span>
<span class="t" style="top:804px;font-size:15px;line-height:17px;left:417.50px;letter-spacing:-0.268px;">0,00</span>
<span class="t" style="top:804px;font-size:15px;line-height:17px;left:561.80px;letter-spacing:-0.268px;">0,00</span>
<span class="t" style="top:804px;font-size:15px;line-height:17px;left:705.30px;letter-spacing:-0.268px;">0,00</span>
<span class="t" style="top:804px;font-size:15px;line-height:17px;left:847.90px;letter-spacing:-0.268px;">0,00</span>
<span class="t" style="top:804px;font-size:15px;line-height:17px;left:992.50px;letter-spacing:-0.268px;">0,00</span>
<span class="t" style="top:834px;font-size:15px;line-height:17px;left:30.50px;letter-spacing:-0.233px;">Stawka VAT 5%</span>
<span class="t" style="top:834px;font-size:15px;line-height:17px;left:273.20px;letter-spacing:-0.268px;">0,00</span>
<span class="t" style="top:834px;font-size:15px;line-height:17px;left:417.50px;letter-spacing:-0.268px;">0,00</span>
<span class="t" style="top:834px;font-size:15px;line-height:17px;left:561.80px;letter-spacing:-0.268px;">0,00</span>
<span class="t" style="top:834px;font-size:15px;line-height:17px;left:705.30px;letter-spacing:-0.268px;">0,00</span>
<span class="t" style="top:834px;font-size:15px;line-height:17px;left:847.90px;letter-spacing:-0.268px;">0,00</span>
<span class="t" style="top:834px;font-size:15px;line-height:17px;left:992.50px;letter-spacing:-0.268px;">0,00</span>
<span class="t" style="top:864px;font-size:15px;line-height:17px;left:30.50px;letter-spacing:-0.233px;">Stawka VAT 0%</span>
<span class="t" style="top:864px;font-size:15px;line-height:17px;left:273.20px;letter-spacing:-0.268px;">0,00</span>
<span class="t" style="top:864px;font-size:15px;line-height:17px;left:417.50px;letter-spacing:-0.268px;">0,00</span>
<span class="t" style="top:864px;font-size:15px;line-height:17px;left:561.80px;letter-spacing:-0.268px;">0,00</span>
<span class="t" style="top:864px;font-size:15px;line-height:17px;left:705.30px;letter-spacing:-0.268px;">0,00</span>
<span class="t" style="top:864px;font-size:15px;line-height:17px;left:847.90px;letter-spacing:-0.268px;">0,00</span>
<span class="t" style="top:864px;font-size:15px;line-height:17px;left:992.50px;letter-spacing:-0.268px;">0,00</span>
<span class="t" style="top:774px;font-size:15px;line-height:17px;left:1037.00px;letter-spacing:-0.353px;">P: (42), (43)</span>
<span class="t" style="top:67px;font-size:15px;line-height:17px;left:1464.60px;font-weight:700;letter-spacing:0.391px;">2023-09-14_08h24_58.png</span>
<span class="t dt" style="top:258px;font-size:9.74px;line-height:11px;left:1311.70px;font-weight:700;">Firma testowa</span>
<span class="t dt" style="top:269px;font-size:9.74px;line-height:11px;left:1311.70px;font-weight:700;">Jerzmanowska ,  Wrocław</span>
<span class="t dt" style="top:281px;font-size:9.71px;line-height:11px;left:1311.70px;font-weight:700;">NIP: 1231231237</span>
<span class="t dt" style="top:261px;font-size:9.75px;line-height:11px;left:1653.70px;font-weight:700;">Miejsce sprzedaży</span>
<span class="t dt" style="top:280px;font-size:9.76px;line-height:11px;left:1634.90px;font-weight:700;">Data zakończenia dostawy</span>
<span class="t dt" style="top:300px;font-size:9.67px;line-height:11px;left:1656.40px;font-weight:700;">Data wystawienia</span>
<span class="t dt" style="top:261px;font-size:9.59px;line-height:11px;left:1830.30px;font-weight:700;">Kraków</span>
<span class="t dt" style="top:280px;font-size:9.71px;line-height:11px;left:1822.80px;font-weight:700;color:#3f7a3f;">14-09-2023</span>
<span class="t dt" style="top:300px;font-size:9.71px;line-height:11px;left:1822.80px;font-weight:700;color:#3f7a3f;">14-09-2023</span>
<span class="t dt" style="top:332px;font-size:9.7px;line-height:11px;left:1433.50px;font-weight:700;">Sprzedawca</span>
<span class="t dt" style="top:332px;font-size:9.65px;line-height:11px;left:1749.50px;font-weight:700;">Nabywca</span>
<span class="t dt" style="top:349px;font-size:9.72px;line-height:11px;left:1314.40px;font-weight:700;">Agencja detektywistyczna KOBRA</span>
<span class="t dt" style="top:361px;font-size:9.75px;line-height:11px;left:1314.40px;font-weight:700;">Więzienna  85 , Kraków, 66-666</span>
<span class="t dt" style="top:372px;font-size:9.56px;line-height:11px;left:1314.40px;font-weight:700;">NIP:</span>
<span class="t dt" style="top:372px;font-size:9.68px;line-height:11px;left:1336.50px;font-weight:700;color:#3f7a3f;">8652566642</span>
<span class="t dt" style="top:383px;font-size:9.73px;line-height:11px;left:1314.40px;font-weight:700;">PKOBP XX O. w Poznaniu</span>
<span class="t dt" style="top:394px;font-size:9.71px;line-height:11px;left:1314.40px;font-weight:700;">10204085-8997894756465464668</span>
<span class="t dt" style="top:349px;font-size:9.68px;line-height:11px;left:1623.30px;font-weight:700;">Firma testowa</span>
<span class="t dt" style="top:361px;font-size:9.74px;line-height:11px;left:1623.30px;font-weight:700;">Jerzmanowska ,  Wrocław</span>
<span class="t dt" style="top:425px;font-size:9.68px;line-height:11px;left:1736.00px;font-weight:700;">Adres dostawy</span>
<span class="t dt" style="top:443px;font-size:9.77px;line-height:11px;left:1620.20px;font-weight:700;">Jerzmanowska ,  Wrocław</span>
<span class="t dt" style="top:471px;font-size:19.39px;line-height:22px;left:1436.70px;font-weight:700;">Faktura VAT zakupu</span>
<span class="t dt" style="top:471px;font-size:19.37px;line-height:22px;left:1629.20px;font-weight:700;color:#2e4d2e;">FZ 3/2023</span>
<span class="t dt" style="top:472px;font-size:19.2px;line-height:21px;left:1724.10px;font-weight:700;">oryginał</span>
<span class="t dt" style="top:514px;font-size:9.6px;line-height:11px;left:1319.37px;font-weight:700;">LP</span>
<span class="t dt" style="top:514px;font-size:9.6px;line-height:11px;left:1426.57px;font-weight:700;">Nazwa</span>
<span class="t dt" style="top:514px;font-size:9.6px;line-height:11px;left:1554.56px;font-weight:700;">Ilość</span>
<span class="t dt" style="top:508px;font-size:9.6px;line-height:11px;left:1592.07px;font-weight:700;">Rabat</span>
<span class="t dt" style="top:520px;font-size:9.6px;line-height:11px;left:1597.94px;font-weight:700;">[%]</span>
<span class="t dt" style="top:514px;font-size:9.6px;line-height:11px;left:1630.01px;font-weight:700;">Cena netto</span>
<span class="t dt" style="top:508px;font-size:9.6px;line-height:11px;left:1695.42px;font-weight:700;">VAT</span>
<span class="t dt" style="top:520px;font-size:9.6px;line-height:11px;left:1696.84px;font-weight:700;">[%]</span>
<span class="t dt" style="top:514px;font-size:9.6px;line-height:11px;left:1722.70px;font-weight:700;">Wartość netto</span>
<span class="t dt" style="top:514px;font-size:9.6px;line-height:11px;left:1793.43px;font-weight:700;">Wartość VAT</span>
<span class="t dt" style="top:508px;font-size:9.6px;line-height:11px;left:1870.35px;font-weight:700;">Wartość</span>
<span class="t dt" style="top:520px;font-size:9.6px;line-height:11px;left:1875.24px;font-weight:700;">brutto</span>
<span class="t dt" style="top:534px;font-size:8.65px;line-height:10px;left:1323.10px;">1</span>
<span class="t dt" style="top:534px;font-size:8.68px;line-height:10px;left:1346.40px;">Black Tiger woda toaletowa 100ml</span>
<span class="t dt" style="top:534px;font-size:8.65px;line-height:10px;left:1568.48px;">1 szt</span>
<span class="t dt" style="top:534px;font-size:8.65px;line-height:10px;left:1601.80px;">0,00</span>
<span class="t dt" style="top:534px;font-size:8.65px;line-height:10px;left:1652.42px;">1 000,00</span>
<span class="t dt" style="top:534px;font-size:8.65px;line-height:10px;left:1701.10px;">23</span>
<span class="t dt" style="top:534px;font-size:8.65px;line-height:10px;left:1752.32px;color:#3f7a3f;">1 000,00</span>
<span class="t dt" style="top:534px;font-size:8.65px;line-height:10px;left:1826.91px;color:#3f7a3f;">230,00</span>
<span class="t dt" style="top:534px;font-size:8.65px;line-height:10px;left:1884.80px;color:#3f7a3f;">1 230,00</span>
<span class="t dt" style="top:561px;font-size:10.85px;line-height:12px;left:1526.30px;font-weight:700;">Razem do zapłaty:</span>
<span class="t dt" style="top:561px;font-size:10.66px;line-height:12px;left:1850.90px;font-weight:700;color:#2e4d2e;">1 230,00</span>
<span class="t dt" style="top:562px;font-size:10.3px;line-height:11px;left:1895.70px;font-weight:700;">EUR</span>
<span class="t dt" style="top:579px;font-size:8.59px;line-height:10px;left:1534.60px;">Słownie do zapłaty:</span>
<span class="t dt" style="top:579px;font-size:8.68px;line-height:10px;left:1639.50px;">tysiąc dwieście trzydzieści EUR</span>
<span class="t dt" style="top:607px;font-size:9.7px;line-height:11px;left:1526.30px;font-weight:700;">Pozostało do zapłaty:</span>
<span class="t dt" style="top:607px;font-size:9.5px;line-height:11px;left:1857.60px;font-weight:700;">1 230,00 EUR</span>
<span class="t dt" style="top:624px;font-size:8.66px;line-height:10px;left:1533.00px;">Przelew, na rachunek:</span>
<span class="t dt" style="top:624px;font-size:8.65px;line-height:10px;left:1785.90px;">10204085-8997894756465464668</span>
<span class="t dt" style="top:637px;font-size:8.65px;line-height:10px;left:1533.00px;">do dnia 21-09-2023</span>
<span class="t dt" style="top:637px;font-size:8.65px;line-height:10px;left:1864.90px;">1 230,00 EUR</span>
<span class="t dt" style="top:671px;font-size:9.65px;line-height:11px;left:1314.20px;font-weight:700;">Wystawił(a):</span>
<span class="t dt" style="top:671px;font-size:9.66px;line-height:11px;left:1625.50px;font-weight:700;">Odebrał(a):</span>
<span class="t dt" style="top:671px;font-size:9.67px;line-height:11px;left:1769.60px;font-weight:700;">Jan Szefowski</span>
<span class="t dt" style="top:733px;font-size:7.62px;line-height:9px;left:1359.70px;font-weight:700;">Podpis osoby upoważnionej do wystawienia faktury VAT</span>
<span class="t dt" style="top:733px;font-size:7.6px;line-height:9px;left:1676.70px;font-weight:700;">Podpis osoby upoważnionej do odbioru faktury VAT</span>
</article></aside></body></html>
